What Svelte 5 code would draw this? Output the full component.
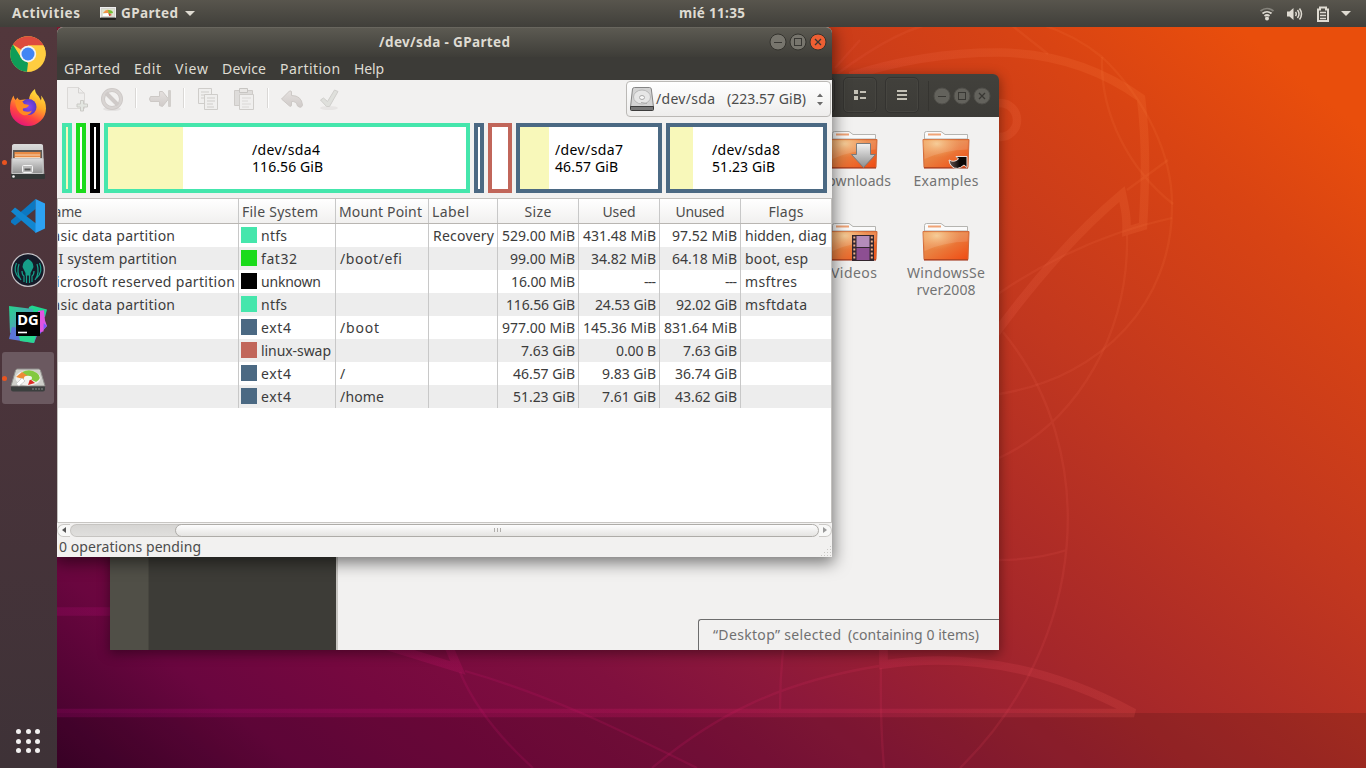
<script>
  // Tracks a label to a given advance width.
  function fit(node, width) {
    const set = () => {
      const n = node.textContent.length;
      node.style.letterSpacing = '0px';
      node.style.marginRight = '0px';
      const natural = node.getBoundingClientRect().width;
      const ls = n > 1 ? (width - natural) / (n - 1) : 0;
      node.style.letterSpacing = ls + 'px';
      node.style.marginRight = -ls + 'px';
    };
    set();
    document.fonts?.ready.then(set);
  }

  const menus = [['GParted', 56], ['Edit', 27], ['View', 33], ['Device', 44], ['Partition', 60], ['Help', 30]];

  const parts = [
    { w: 10, c: '#45e6ac', used: 2 },
    { w: 10, c: '#1bdb1b', used: 0 },
    { w: 10, c: '#000000', used: 0 },
    { w: 366, c: '#45e6ac', used: 75, name: '/dev/sda4', nw: 68, size: '116.56 GiB', sw: 71 },
    { w: 10, c: '#4b6983', used: 0 },
    { w: 24, c: '#c1665a', used: 0 },
    { w: 146, c: '#4b6983', used: 29, name: '/dev/sda7', nw: 68, size: '46.57 GiB', sw: 63 },
    { w: 161, c: '#4b6983', used: 23, name: '/dev/sda8', nw: 68, size: '51.23 GiB', sw: 63 }
  ];

  const head = [['Name', 39, 'name'], ['File System', 76, ''], ['Mount Point', 83, ''], ['Label', 37, ''], ['Size', 27, 'mid'], ['Used', 33, 'mid'], ['Unused', 49, 'mid'], ['Flags', 35, 'mid']];

  const rows = [
    { n: ['Basic data partition', 132], c: '#45e6ac', f: ['ntfs', 26], m: null, l: ['Recovery', 61], s: ['529.00 MiB', 73], u: ['431.48 MiB', 73], v: ['97.52 MiB', 65], g: ['hidden, diag', 82] },
    { n: ['EFI system partition', 134], c: '#1bdb1b', f: ['fat32', 36], m: ['/boot/efi', 62], l: null, s: ['99.00 MiB', 65], u: ['34.82 MiB', 65], v: ['64.18 MiB', 65], g: ['boot, esp', 63] },
    { n: ['Microsoft reserved partition', 192], c: '#000000', f: ['unknown', 60], m: null, l: null, s: ['16.00 MiB', 64], u: ['---', 12], v: ['---', 12], g: ['msftres', 52] },
    { n: ['Basic data partition', 132], c: '#45e6ac', f: ['ntfs', 26], m: null, l: null, s: ['116.56 GiB', 69], u: ['24.53 GiB', 61], v: ['92.02 GiB', 61], g: ['msftdata', 62] },
    { n: null, c: '#4b6983', f: ['ext4', 30], m: ['/boot', 39], l: null, s: ['977.00 MiB', 73], u: ['145.36 MiB', 73], v: ['831.64 MiB', 73], g: null },
    { n: null, c: '#c1665a', f: ['linux-swap', 70], m: null, l: null, s: ['7.63 GiB', 54], u: ['0.00 B', 40], v: ['7.63 GiB', 54], g: null },
    { n: null, c: '#4b6983', f: ['ext4', 30], m: ['/', 6], l: null, s: ['46.57 GiB', 62], u: ['9.83 GiB', 54], v: ['36.74 GiB', 62], g: null },
    { n: null, c: '#4b6983', f: ['ext4', 30], m: ['/home', 44], l: null, s: ['51.23 GiB', 62], u: ['7.61 GiB', 54], v: ['43.62 GiB', 62], g: null }
  ];
</script>

{#snippet t(p)}{#if p}<span class="t" use:fit={p[1]}>{p[0]}</span>{/if}{/snippet}

{#snippet folder(kind)}
  <svg class="folder" width="48" height="42" viewBox="0 0 48 42">
    <path d="M2.5 10V4.5q0-2 2-2H19l4 3h22.5V10z" fill="#fafafa" stroke="#b5b4b0" />
    <rect x="6" y="4.500" width="13" height="2" fill="#f0a376" />
    <path d="M1 10.500h46L46 38.500H2z" fill="url(#fold)" stroke="#cf6a3c" />
    <path d="M1 10.500h46L46 38.500H2z" fill="url(#shine)" />
    <path d="M2 11.500h44l-.4 9Q22 21 2.500 30z" fill="#fff" opacity=".13" />
    <path d="M2 39h44" stroke="#9c2204" />
    {#if kind === 'down'}
      <path d="M26.500 14.500h14v11h5L33.500 38.500 21.500 25.500h5z" fill="url(#silver)" stroke="#7b7b7b" />
    {:else if kind === 'link'}
      <path d="M27 31q5 3 9.500-1l-2.500-2.500h11v11l-3-2.500q-7 6-12 1.500-2.500-2-3-6.500z" fill="url(#ink)" stroke="#e8ddd8" />
    {:else if kind === 'video'}
      <rect x="22" y="14" width="22" height="26" fill="#33262e" />
      <rect x="26.500" y="15" width="13" height="11" fill="#b48cba" />
      <rect x="26.500" y="27" width="13" height="12" fill="#8d4f92" />
      <path d="M24.300 15.500v24M41.800 15.500v24" stroke="#eeb08a" stroke-width="2" stroke-dasharray="2 2" />
    {/if}
  </svg>
{/snippet}

{#snippet winbtn(kind, active)}
  <svg width="18" height="18" viewBox="0 0 18 18">
    <circle cx="9" cy="9" r="8" fill={kind === 'close' && active ? '#ee5f33' : active ? '#77756d' : '#63625c'} stroke={active ? '#34332e' : '#504f4a'} />
    {#if kind === 'min'}<path d="M5 9.500h8" stroke="#383733" />
    {:else if kind === 'max'}<rect x="5.500" y="5.500" width="7" height="7" fill="none" stroke="#383733" />
    {:else}<path d="M6 6l6 6M12 6l-6 6" stroke="#383733" stroke-width="1.300" />{/if}
  </svg>
{/snippet}

<div class="screen">
  <svg class="wall" width="1366" height="768" viewBox="0 0 1366 768" fill="none">
    <defs>
      <linearGradient id="ln" gradientUnits="userSpaceOnUse" x1="57" y1="700" x2="1150" y2="100">
        <stop offset="0" stop-color="#b00878" stop-opacity=".22" />
        <stop offset=".45" stop-color="#d01860" stop-opacity=".26" />
        <stop offset=".7" stop-color="#e04850" stop-opacity=".22" />
        <stop offset="1" stop-color="#ff8440" stop-opacity=".17" />
      </linearGradient>
      <linearGradient id="fold" x1="0" y1="0" x2="1" y2="1">
        <stop offset="0" stop-color="#f09a50" /><stop offset=".45" stop-color="#e98040" /><stop offset="1" stop-color="#f04a12" />
      </linearGradient>
      <radialGradient id="shine" cx=".3" cy=".15" r=".5">
        <stop offset="0" stop-color="#f8d9a0" stop-opacity=".75" /><stop offset="1" stop-color="#f4a860" stop-opacity="0" />
      </radialGradient>
      <linearGradient id="silver" x1="0" y1="0" x2="0" y2="1">
        <stop offset="0" stop-color="#f2f2f2" /><stop offset="1" stop-color="#8d8d8d" />
      </linearGradient>
      <linearGradient id="ink" x1="0" y1="0" x2="1" y2="0">
        <stop offset="0" stop-color="#6b5a56" /><stop offset=".6" stop-color="#0c0706" />
      </linearGradient>
    </defs>
    <rect x="0" y="713" width="1366" height="55" fill="#000" opacity=".12" />
    <g stroke="url(#ln)" stroke-width="8.500">
      <path d="M850 76Q925 52 1000 52.500Q1080 54 1141 98C1147 145 1145 190 1143 226L1126.500 231C1127 216 1125 208 1122 194Q1060 246 996 333" />
      <circle cx="1000" cy="120" r="17" />
      <path d="M0 611.500H112" />
      <path d="M0 713H1134Q1010 646 883.500 664.500V645" />
      <path d="M384 645L458 668L448 645" />
    </g>
    <g stroke="url(#ln)" stroke-width="2.300" opacity=".75">
      <path d="M1040 24Q1075 35 1102 57C1145 98 1173 155 1172 207C1172 300 1105 377 999 394" />
      <path d="M1010 24L1048 54M1102 57C1100 115 1130 170 1173 204M1127 190L1168 160M1172 218Q1080 238 998 294" />
      <path d="M1127 235C1129 330 1080 420 999 458M1003 332C1100 450 1090 640 960 768M999 560Q1035 560 1067 550" />
      <path d="M837 74Q900 27 940 22M860 40L835 68" />
      <path d="M783 650Q780 680 780 709M881 668Q880 720 884 768M879 666C780 682 715 715 652 768" />
      <path d="M460 672Q480 720 533 768M465 671C550 695 620 730 697 768" />
    </g>
  </svg>

  <section class="files">
    <header class="fhead">
      <div class="fbtn"></div>
      <div class="fbtn"><svg width="14" height="14" viewBox="0 0 14 14"><path d="M1 2h4v4H1zM1 8h4v4H1zM7 3h6v2H7zM7 9h6v2H7z" fill="#c3c0b5" /></svg></div>
      <div class="fbtn"><svg width="12" height="12" viewBox="0 0 12 12"><path d="M1 1h10v2H1zM1 5h10v2H1zM1 9h10v2H1z" fill="#c3c0b5" /></svg></div>
      <i class="fsep"></i>
      <div class="wb">{@render winbtn('min', false)}{@render winbtn('max', false)}{@render winbtn('close', false)}</div>
    </header>
    <div class="fbody">
      <div class="places"><i></i></div>
      <div class="view">
        <div class="grid">
          <div class="item">{@render folder('down')}{@render t(['Downloads', 74])}</div>
          <div class="item">{@render folder('link')}{@render t(['Examples', 65])}</div>
          <div class="item">{@render folder('video')}{@render t(['Videos', 46])}</div>
          <div class="item">{@render folder('')}{@render t(['WindowsSe', 78])}{@render t(['rver2008', 59])}</div>
        </div>
        <div class="float">{@render t(['“Desktop” selected', 128])}{@render t(['(containing 0 items)', 131])}</div>
      </div>
    </div>
  </section>

  <section class="gp">
    <header class="title">
      <div class="ttl">{@render t(['/dev/sda - GParted', 131])}</div>
      <div class="wb">{@render winbtn('min', true)}{@render winbtn('max', true)}{@render winbtn('close', true)}</div>
    </header>
    <nav class="menu">{#each menus as m}{@render t(m)}{/each}</nav>
    <div class="tools">
      <svg width="300" height="38" viewBox="0 0 300 38" fill="none">
        <defs>
          <linearGradient id="g" x1="0" y1="0" x2="0" y2="1"><stop offset="0" stop-color="#e4e0de" /><stop offset="1" stop-color="#d0cbc9" /></linearGradient>
        </defs>
        <path d="M10.500 7.500h11l6 6v15h-17z" fill="#efeeed" stroke="#dbd9d7" /><path d="M21.500 7.500v5.500h6" stroke="#d5d3d1" />
        <path d="M23.500 20.500h3v3.500h4v3h-4v4h-3v-4h-3.500v-3h3.500z" fill="#e3e6e1" stroke="#cbcac6" />
        <ellipse cx="55" cy="29" rx="9" ry="2" fill="#e4e2e1" />
        <circle cx="55" cy="19" r="9" stroke="#cdc8c6" stroke-width="4" /><circle cx="55" cy="19" r="9" stroke="#d8d4d2" stroke-width="2.400" /><path d="M49 13l12 12" stroke="#cfcac8" stroke-width="4" />
        <path d="M78.500 8v20M126.500 8v20M210.500 8v20" stroke="#dad8d6" /><path d="M79.500 8v20M127.500 8v20M211.500 8v20" stroke="#fff" />
        <path d="M93.500 16.500h9v-5l3 0 6 7.500-6 7.500-3-1v-4h-9q-2-2.500 0-5z" fill="url(#g)" stroke="#cdc9c6" /><rect x="111" y="10" width="3" height="17" rx="1" fill="#d2cfcc" />
        <g fill="#f0efee" stroke="#cfcdca"><path d="M141.500 8.500h13v15h-13z" /><path d="M144 12h8M144 15h6M144 18h5" /><path d="M147.500 14.500h13v15h-13z" /><path d="M150 18h8M150 21h8M150 24h6M150 27h7" /></g>
        <g><path d="M177.500 10.500h18v15h-18z" fill="#dedcda" stroke="#cecbc8" /><path d="M182.500 8.500h8v4h-8z" fill="#e9e7e5" stroke="#c7c5c2" /><path d="M182.500 14.500h14v15h-14z" fill="#f0efee" stroke="#cfcdca" /><path d="M185 18h9M185 21h6M185 24h9M185 27h7" stroke="#dad8d6" /></g>
        <path d="M224.500 19l8-8q2-.5 2 1v3.500q10 0 11 9.500-1 4-5 1-1-5-6-4.500v3.500q0 2-2 1z" fill="url(#g)" stroke="#cdc9c6" />
        <ellipse cx="272" cy="28" rx="9" ry="2" fill="#e7e5e4" />
        <path d="M263.500 20l3-2 4 3.500 7-11.500 3.500 1.500-8.500 15h-3z" fill="#dfe0dc" stroke="#d0cfcc" />
      </svg>
      <div class="combo">
        <svg width="26" height="26" viewBox="0 0 26 26"><path d="M1.500 21L3.500 3q.3-1.500 2-1.500h15q1.500 0 1.800 1.500L24.500 21z" fill="#d3d3d3" stroke="#858585" /><path d="M1.500 20.500h23v3q0 1-1 1h-21q-1 0-1-1z" fill="#777" stroke="#3c3c3c" /><ellipse cx="13" cy="11" rx="8.500" ry="7" fill="#e6e6e6" stroke="#b8b8b8" /><ellipse cx="13" cy="11.500" rx="2.500" ry="2" fill="#f8f8f8" stroke="#aaa" /><path d="M18 17.500l-6-1" stroke="#aaa" /></svg>
        {@render t(['/dev/sda', 59])}<b></b>{@render t(['(223.57 GiB)', 79])}
        <svg class="spin" width="6" height="13" viewBox="0 0 6 13"><path d="M0 4l3-3.500L6 4zM0 9l3 3.500L6 9z" fill="#6b6b6b" /></svg>
      </div>
    </div>
    <div class="map">
      {#each parts as p}
        <div class="part" style="width:{p.w}px;border-color:{p.c}">
          <div class="used" style="width:{p.used}px"></div>
          {#if p.name}<div class="cap"><div>{@render t([p.name, p.nw])}</div><div>{@render t([p.size, p.sw])}</div></div>{/if}
        </div>
      {/each}
    </div>
    <div class="tree">
      <div class="row head">{#each head as h}<div class="c {h[2]}">{@render t(h)}</div>{/each}</div>
      {#each rows as r}
        <div class="row">
          <div class="c name">{@render t(r.n)}</div>
          <div class="c fs"><i style="background:{r.c}"></i>{@render t(r.f)}</div>
          <div class="c">{@render t(r.m)}</div>
          <div class="c">{@render t(r.l)}</div>
          <div class="c num">{@render t(r.s)}</div>
          <div class="c num">{@render t(r.u)}</div>
          <div class="c num">{@render t(r.v)}</div>
          <div class="c">{@render t(r.g)}</div>
        </div>
      {/each}
    </div>
    <div class="scroll">
      <span class="arr l"><svg width="4" height="6" viewBox="0 0 4 6"><path d="M4 0v6L0 3z" fill="#555" /></svg></span>
      <div class="trough"></div>
      <div class="thumb"><i></i><i></i><i></i></div>
      <span class="arr r"><svg width="4" height="6" viewBox="0 0 4 6"><path d="M0 0v6l4-3z" fill="#999" /></svg></span>
    </div>
    <footer class="status">{@render t(['0 operations pending', 142])}
      <svg width="11" height="11" viewBox="0 0 11 11"><path d="M9 1.500h2M6 4.500h5M3 7.500h8M0 10.500h11" stroke="#c9c8c5" stroke-dasharray="1 2" /></svg>
    </footer>
  </section>

  <header class="top">
    <div class="tl">
      {@render t(['Activities', 68])}
      <svg class="app" width="16" height="14" viewBox="0 0 16 14"><rect x=".5" y=".5" width="15" height="10" fill="#d5d5d0" stroke="#eee" /><rect x="2" y="2" width="12" height="7" fill="#dde4d2" /><path d="M3 6q3-4 6-3l3 2-4 1z" fill="#f0954a" /><path d="M8 3q5 0 5 3l-4 1z" fill="#76bd35" /><path d="M8 6l4 2-3 1z" fill="#db3a2a" /><path d="M3 7l5-1 1 3H3z" fill="#fff" /><rect y="10.500" width="16" height="2.500" rx="1" fill="#22221f" /></svg>
      {@render t(['GParted', 57])}
      <i class="tri"></i>
    </div>
    <div class="clock">{@render t(['mié 11:35', 66])}</div>
    <div class="tr">
      <svg width="16" height="14" viewBox="0 0 16 14" fill="none"><path d="M1.500 4Q8-1 14.500 4" stroke="#85837c" stroke-width="1.700" /><path d="M3.500 6.500Q8 3 12.500 6.500M5.500 9Q8 7 10.500 9" stroke="#dfdbd2" stroke-width="1.700" /><circle cx="8" cy="11.500" r="2" fill="#dfdbd2" /></svg>
      <svg width="16" height="14" viewBox="0 0 16 14" fill="none"><path d="M0 4.500h2.500L6.500 1v12L2.500 9.500H0z" fill="#dfdbd2" /><path d="M8.500 5q1.500 2 0 4M10.500 3q3 4 0 8M12.500 1.500q4 5.500 0 11" stroke="#dfdbd2" stroke-width="1.500" /></svg>
      <svg width="12" height="16" viewBox="0 0 12 16" fill="none"><path d="M1 3.500h2v-2h6v2h2V15H1z" stroke="#dfdbd2" stroke-width="2" /><path d="M3 6.500h6M3 9.500h6M3 12.500h6" stroke="#dfdbd2" stroke-width="1.500" /></svg>
      <i class="tri"></i>
    </div>
  </header>

  <aside class="dock">
    <div class="slot"><svg width="36" height="36" viewBox="0 0 36 36"><circle cx="18" cy="18" r="17.800" fill="#ffcd40" /><path d="M18 18L2.900 8.600A17.800 17.800 0 0 1 33.600 9.500H18z" fill="#dd4b3e" /><path d="M2.900 8.600L11 21.500 18 27 17 35.800A17.800 17.800 0 0 1 2.900 8.600z" fill="#0f9d58" /><path d="M18 9.500h15.500Q36 14 35.500 20L24.500 23 17 35.800q3.500.2 6-.7l3-12L18 10z" fill="#ffcd40" /><circle cx="18" cy="18" r="8.200" fill="#f3f4f4" /><circle cx="18" cy="18" r="6.500" fill="#4285f4" /></svg></div>
    <div class="slot"><svg width="38" height="38" viewBox="0 0 38 38"><defs><linearGradient id="ff" x1=".8" y1="0" x2=".3" y2="1"><stop offset="0" stop-color="#ffe741" /><stop offset=".4" stop-color="#ffa728" /><stop offset=".7" stop-color="#ff4640" /><stop offset="1" stop-color="#e4127c" /></linearGradient><radialGradient id="fp"><stop offset="0" stop-color="#8b48f0" /><stop offset="1" stop-color="#5b3bc8" /></radialGradient></defs><path d="M4.500 6.500q.5 3 2 4.500l2-2.500q.5 2 2.500 2.500 5-1 9 0 .5-7 6-11 0 4 3.500 7l2.500 4.500q1-2 0-5 5 5.500 5 13a18 17.500 0 0 1-36 0Q1 12 4.500 6.500z" fill="url(#ff)" /><circle cx="19.500" cy="18" r="8" fill="url(#fp)" /><path d="M6 12q6-3 9 3l5 1q-1 3-6 3.500-1 3 3 3 3 1 6-1-3 6-9 4.500-7-3-8-14z" fill="#ff8a22" /></svg></div>
    <div class="slot"><em></em><svg width="38" height="38" viewBox="0 0 38 38"><defs><linearGradient id="cab" x1="0" y1="0" x2="0" y2="1"><stop offset="0" stop-color="#dcdcdc" /><stop offset="1" stop-color="#909090" /></linearGradient></defs><path d="M3 2.500q.5-1.500 2-1.500h27q2 0 2 1.500L35.500 35h-33z" fill="url(#cab)" /><path d="M4 7h29v9H4z" fill="#5e5a57" /><path d="M5.500 9h26v6.500h-26z" fill="#e98b45" /><path d="M6 12h25M6 14.500h25" stroke="#f5d5b5" /><path d="M3 15.500h31v15H3z" fill="url(#cab)" stroke="#c4c4c4" /><rect x="13.500" y="22.500" width="10" height="7" rx="1" fill="#bbb" stroke="#f4f4f4" /><rect x="15.500" y="25.500" width="6" height="2" fill="#555" /><path d="M2 31h34v4q0 1-1 1H3q-1 0-1-1z" fill="#333736" /><circle cx="4.500" cy="33.500" r="1.300" fill="#eee" /></svg></div>
    <div class="slot"><svg width="34" height="34" viewBox="0 0 34 34"><path d="M24.500 0v10L4 26.500 0 23.500v-2z" fill="#0c78c2" /><path d="M0 12.500L4 8.500 25 24.500V34z" fill="#1186d0" /><path d="M24.500 0L34 4.500v25L24.500 34z" fill="#2da2f3" /></svg></div>
    <div class="slot"><svg width="34" height="34" viewBox="0 0 34 34" fill="none"><circle cx="17" cy="17" r="16.300" fill="#151a28" stroke="#c4c2c6" stroke-width="1.200" /><path d="M17 6q5.500 2.500 5.500 8l-3 6v2.500h-5V20l-3-6Q11.500 8.500 17 6z" fill="#169e89" /><path d="M15.500 22v8M18.500 22v8M11 18q0 4 2 5v6M23 18q0 4-2 5v6M8 11q-3 9 2 16M26 11q3 9-2 16M5.500 10q-4 9 3 15M28.500 10q4 9-3 15" stroke="#169e89" stroke-width="1.200" /></svg></div>
    <div class="slot"><svg width="38" height="38" viewBox="0 0 38 38"><defs><linearGradient id="d1" x1="0" y1="0" x2="1" y2="1"><stop offset="0" stop-color="#25d58b" /><stop offset="1" stop-color="#6b7ad5" /></linearGradient><linearGradient id="d2" x1="0" y1="0" x2="0" y2="1"><stop offset="0" stop-color="#e34de0" /><stop offset=".65" stop-color="#d860e8" /><stop offset="1" stop-color="#6b57ff" /></linearGradient></defs><path d="M20 2l3-1.500L38 4.500 36 12H18z" fill="#20d690" /><path d="M29 6l6-.5 1 10 2 5.500-7 8z" fill="url(#d2)" /><path d="M0 1l24 3v22L1 28z" fill="url(#d1)" /><path d="M3 22l27 4-5 12L0 34z" fill="#5b76d8" /><path d="M10 31h17l-2 7-14-2z" fill="#2ad790" /><path d="M31 15l7 6-10 10z" fill="#7a5cf8" /><path d="M29 6l6-.5-.5 21-4 .5z" fill="#e254e2" /><rect x="7" y="7" width="24" height="24" fill="#000" /><text x="8.300" y="20" font-family="Noto Sans" font-weight="700" font-size="14" fill="#fff" textLength="21.500" lengthAdjust="spacingAndGlyphs">DG</text><path d="M9 27.500h9" stroke="#fff" stroke-width="1.600" /></svg></div>
    <div class="slot on"><em></em><svg width="36" height="28" viewBox="0 0 36 28"><path d="M1 20L5.500 4.500Q6 3 7.500 3h21q1.500 0 2 1.500L35 20z" fill="#cfcfca" stroke="#8e8e8a" /><path d="M1 20.500h34v3q0 2-2 2H3q-2 0-2-2z" fill="#3b3f3e" /><ellipse cx="18" cy="12" rx="12.500" ry="7.500" fill="#f1f1ef" /><path d="M12 6q8-4 15 1 6 5-1 9l-8-4z" fill="#83c940" /><path d="M12 6L6 11l7 2 5-3z" fill="#ed8b35" /><path d="M20 13l5 4-7 2z" fill="#dc2d25" /><ellipse cx="18" cy="12" rx="4" ry="2.200" fill="#f4f7ee" /><path d="M6 18l6-6 3 3-6 5z" fill="#fff" stroke="#bbb" stroke-width=".6" /><path d="M22 23h11" stroke="#888" stroke-dasharray="2 1" /></svg></div>
    <div class="apps">{#each Array(9) as _}<i></i>{/each}</div>
  </aside>
</div>

<style>
  :global(body) { margin: 0; overflow: hidden; }
  .screen { position: relative; width: 1366px; height: 768px; overflow: hidden; font: 14px/17px "Noto Sans", sans-serif; color: #3c3c3c; background: linear-gradient(39.3deg, #40022b 2.500%, #6a063f 13%, #75083f 20%, #80103e 31%, #8c183b 38%, #a5272a 52%, #c1371f 68%, #d94413 84%, #e94e0c 93%); }
  .screen :global(*) { box-sizing: border-box; }
  svg { display: block; flex: none; }
  .t { display: inline-block; white-space: pre; flex: none; }
  .wall { position: absolute; left: 0; top: 0; }

  .top { position: absolute; inset: 0 0 auto 0; height: 27px; display: grid; grid-template-columns: 620px 126px 1fr; align-items: center; background: linear-gradient(#58554d, #403f3a); color: #dfdbd2; font-weight: 700; font-size: 13.500px; }
  .tl { display: flex; align-items: center; padding-left: 12px; }
  .app { margin: 0 5px 0 20px; }
  .clock { margin-left: 59px; }
  .tri { width: 0; height: 0; border: 5px solid transparent; border-top-color: #dfdbd2; border-bottom: 0; }
  .tl .tri { margin-left: 7px; }
  .tr { display: flex; align-items: center; justify-content: flex-end; padding-right: 15px; }
  .tr svg + svg { margin-left: 12px; }
  .tr svg:nth-of-type(3) { margin-left: 14px; }
  .tr .tri { margin-left: 12px; }

  .dock { position: absolute; left: 0; top: 27px; width: 57px; height: 741px; display: flex; flex-direction: column; align-items: center; padding: 1px 1px 0 0; gap: 2px; background: linear-gradient(#52373c, #4b343b 45%, #3e3237); }
  .slot { position: relative; width: 52px; height: 52px; display: flex; align-items: center; justify-content: center; border-radius: 3px; }
  .slot.on { background: #6b5960; padding-top: 4px; }
  .slot em { position: absolute; left: 0; top: 24px; width: 5px; height: 5px; border-radius: 50%; background: #e95420; }
  .apps { margin-top: auto; margin-bottom: 15px; display: grid; grid-template-columns: repeat(3, 5px); gap: 4.500px; }
  .apps i { width: 5px; height: 5px; border-radius: 50%; background: #f2f0f0; }

  .files { position: absolute; left: 110px; top: 74px; width: 889px; height: 576px; display: flex; flex-direction: column; border-radius: 6px 6px 0 0; box-shadow: 0 3px 12px 1px rgba(0, 0, 0, .38); }
  .fhead { height: 43px; flex: none; border-radius: 6px 6px 0 0; background: linear-gradient(#42413c, #3c3b37); display: flex; align-items: center; justify-content: flex-end; padding-right: 8px; }
  .fbtn { width: 34px; height: 36px; border: 1px solid #343330; border-radius: 5px; box-shadow: inset 0 0 0 1px #464540; display: flex; align-items: center; justify-content: center; margin-right: 8px; margin-top: -1px; }
  .fsep { width: 1px; height: 30px; background: #353430; margin: 0 4px 0 1px; }
  .wb { display: flex; gap: 2px; }
  .fbody { flex: 1; display: flex; min-height: 0; }
  .places { width: 228px; background: #3d3c37; border-right: 2px solid #c7c5c1; }
  .places i { display: block; width: 39px; height: 100%; background: #504f47; border-right: 1px solid #47463f; }
  .view { flex: 1; background: #f2f1f0; display: flex; flex-direction: column; justify-content: space-between; align-items: flex-end; }
  .grid { display: grid; grid-template-columns: 92px 92px; grid-auto-rows: 92px; padding: 12px 7px 0 0; color: #737373; }
  .item { display: flex; flex-direction: column; align-items: center; }
  .folder { margin-bottom: 1px; }
  .float { height: 31px; width: 301px; border: 1px solid #6d6d6d; border-width: 1px 0 0 1px; border-radius: 3px 0 0 0; padding: 6px 0 0 14px; display: flex; gap: 7px; color: #707070; }

  .gp { position: absolute; left: 57px; top: 27px; width: 775px; height: 530px; display: flex; flex-direction: column; background: #f2f1f0; border-radius: 6px 6px 0 0; box-shadow: 0 4px 16px 2px rgba(0, 0, 0, .5); }
  .title { height: 30px; display: flex; align-items: center; border-radius: 6px 6px 0 0; background: linear-gradient(#5c5a52, #3e3d38); border-top: 1px solid #68665e; color: #dfdbd2; font-weight: 700; padding-right: 5px; font-size: 13.500px; }
  .title .wb { margin-top: -1px; }
  .ttl { margin: 0 auto 0 322px; }
  .menu { height: 23px; background: #3c3b37; color: #dfdbd2; display: flex; gap: 14px; padding: 3px 0 0 7px; }
  .tools { height: 39px; display: flex; justify-content: space-between; }
  .combo { width: 205px; height: 36px; margin: 1px 1px 0 0; border: 1px solid #bbb9b6; border-radius: 4px; background: linear-gradient(#fff, #eeedec); display: flex; align-items: center; padding-left: 2px; color: #4c4c4c; }
  .combo svg { margin-right: 1px; }
  .combo .t { margin-top: -2px; }
  .combo b { width: 12px; }
  .combo .spin { margin: 1px 0 0 11px; }
  .map { height: 79px; display: flex; gap: 4px; padding: 4px 0 5px 5px; color: #000; }
  .part { height: 70px; border: 4px solid; background: #fff; display: flex; position: relative; flex: none; }
  .used { background: #f8f8ba; }
  .cap { position: absolute; inset: 0; display: flex; flex-direction: column; justify-content: center; align-items: flex-start; }
  .part:nth-child(4) .cap { padding-left: 144px; }
  .part:nth-child(7) .cap { padding-left: 35px; }
  .part:nth-child(8) .cap { padding-left: 42px; }

  .tree { height: 324px; border: 1px solid #c3c1be; border-bottom: 0; background: #fff; overflow: hidden; }
  .row { display: grid; grid-template-columns: 181px 97px 93px 69px 81px 81px 81px 90px; height: 23px; }
  .row:nth-child(odd) { background: #ededed; }
  .row.head { height: 25px; background: linear-gradient(#fff, #f1f0ef); border-bottom: 1px solid #b9b6b2; color: #4c4c4c; }
  .c { display: flex; align-items: center; border-right: 1px solid #c8c8c8; padding: 0 0 1px 4px; min-width: 0; overflow: hidden; }
  .c:last-child { border-right: 0; }
  .head .c { padding: 1px 0 0 3px; }
  .head .mid { justify-content: center; padding-left: 0; }
  .c.name { padding-left: 0; }
  .c.name .t { position: relative; left: -15px; }
  .c.num { justify-content: flex-end; padding: 0 3px 1px 0; }
  .c.fs { padding-left: 2px; }
  .fs i { width: 16px; height: 16px; margin: 3px 4px 0 0; flex: none; align-self: flex-start; }
  .scroll { height: 15px; display: flex; align-items: center; border-top: 1px solid #c8c6c3; }
  .arr { width: 13px; height: 13px; display: flex; align-items: center; justify-content: center; border: 1px solid #cbc9c6; background: #f8f8f7; }
  .arr.l { border-radius: 7px 0 0 7px; border-right: 0; }
  .arr.r { border-radius: 0 7px 7px 0; border-left: 0; }
  .trough { width: 112px; height: 13px; border: 1px solid #c6c4c1; border-right: 0; border-radius: 7px 0 0 7px; background: linear-gradient(#d6d5d3, #e0dfdd); margin-right: -7px; }
  .thumb { flex: 1; height: 13px; border: 1px solid #aeaca8; border-radius: 7px; background: linear-gradient(#fdfdfd, #e5e4e2); display: flex; gap: 2px; align-items: center; justify-content: center; z-index: 1; }
  .thumb i { width: 1px; height: 4px; background: #b0aeab; }
  .status { flex: 1; display: flex; justify-content: space-between; align-items: flex-end; padding: 0 0 1px 2px; color: #4c4c4c; }
  .status .t { margin-bottom: 1px; }
</style>
